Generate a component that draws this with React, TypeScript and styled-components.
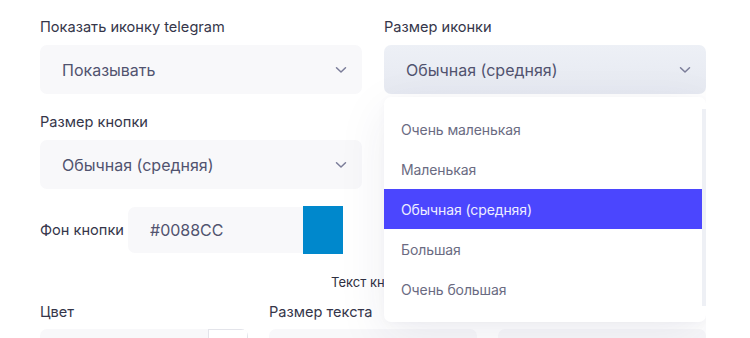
import React from "react";
import styled, { createGlobalStyle } from "styled-components";

const GlobalStyle = createGlobalStyle`
  body {
    margin: 0;
    background: #ffffff;
    font-family: Inter, "Noto Sans", sans-serif;
    overflow: hidden;
  }
`;

const Page = styled.div`
  width: 706px;
  height: 338px;
  padding: 17px 0 0 40px;
  box-sizing: border-box;
  overflow: hidden;
`;

const TopGrid = styled.div`
  display: grid;
  grid-template-columns: 322px 322px;
  column-gap: 22px;
  row-gap: 18px;
`;

const Field = styled.div`
  position: relative;
  display: flex;
  flex-direction: column;
  gap: 8px;
`;

const Label = styled.div`
  font-size: 14.6px;
  font-weight: 400;
  line-height: 20px;
  color: #35364a;
`;

const Select = styled.div<{ $active?: boolean }>`
  height: 49px;
  box-sizing: border-box;
  padding: 0 15px 0 22px;
  border-radius: 7px;
  background: ${(p) =>
    p.$active ? "linear-gradient(180deg, #edf0f6 0%, #e6e9f1 100%)" : "#f8f8fa"};
  display: flex;
  align-items: center;
  justify-content: space-between;
  font-size: 16px;
  color: #51536f;
`;

const Chevron = () => (
  <svg width="12" height="8" viewBox="0 0 12 8" fill="none">
    <path d="M1.5 1.8 6 6 10.5 1.8" stroke="#7b7d99" strokeWidth="1.5" strokeLinecap="round" strokeLinejoin="round" />
  </svg>
);

const Dropdown = styled.div`
  position: absolute;
  top: calc(100% + 3px);
  left: 0;
  width: 322px;
  height: 225px;
  background: #ffffff;
  border-radius: 7px;
  box-shadow: 0 14px 50px rgba(40, 40, 90, 0.08), 0 2px 8px rgba(40, 40, 90, 0.03);
  display: flex;
  z-index: 5;
`;

const Options = styled.div`
  flex: 1;
  padding-top: 12px;
`;

const Option = styled.div<{ $selected?: boolean }>`
  height: 40px;
  padding-left: 17px;
  display: flex;
  align-items: center;
  font-size: 14px;
  letter-spacing: -0.1px;
  color: ${(p) => (p.$selected ? "#eeeeff" : "#6a6b82")};
  background: ${(p) => (p.$selected ? "#4b46fe" : "transparent")};
`;

const ScrollTrack = styled.div`
  width: 4px;
  margin: 12px 0 16px;
  background: #eef0f5;
`;

const ColorRow = styled.div`
  margin-top: 17px;
  display: flex;
  align-items: center;
`;

const InlineLabel = styled(Label)`
  width: 88px;
`;

const ColorInput = styled.div`
  width: 175px;
  height: 46px;
  box-sizing: border-box;
  padding-left: 22px;
  border-radius: 7px 0 0 7px;
  background: #f8f8fa;
  display: flex;
  align-items: center;
  font-size: 16px;
  color: #51536f;
`;

const Swatch = styled.div<{ $color: string; $w: number; $h: number }>`
  width: ${(p) => p.$w}px;
  height: ${(p) => p.$h}px;
  background: ${(p) => p.$color};
  box-sizing: border-box;
  border: ${(p) => (p.$color === "#ffffff" ? "1px solid #e3e4ea" : "none")};
  flex-shrink: 0;
`;

const SectionTitle = styled.div`
  margin-top: 19px;
  text-align: center;
  font-size: 13px;
  line-height: 18px;
  color: #2f3042;
`;

const BottomGrid = styled.div`
  margin-top: 11px;
  display: grid;
  grid-template-columns: 208px 208px 208px;
  column-gap: 21px;
`;

const SmallField = styled.div`
  display: flex;
  flex-direction: column;
  gap: 7px;
`;

const BottomInput = styled.div`
  height: 46px;
  border-radius: 7px;
  background: #f8f8fa;
  display: flex;
  justify-content: flex-end;
  overflow: hidden;
`;

const sizes = ["Очень маленькая", "Маленькая", "Обычная (средняя)", "Большая", "Очень большая"];

export default function App() {
  return (
    <>
      <GlobalStyle />
      <Page>
        <TopGrid>
          <Field>
            <Label>Показать иконку telegram</Label>
            <Select>
              Показывать
              <Chevron />
            </Select>
          </Field>
          <Field>
            <Label>Размер иконки</Label>
            <Select $active>
              Обычная (средняя)
              <Chevron />
            </Select>
            <Dropdown>
              <Options>
                {sizes.map((s) => (
                  <Option key={s} $selected={s === "Обычная (средняя)"}>
                    {s}
                  </Option>
                ))}
              </Options>
              <ScrollTrack />
            </Dropdown>
          </Field>
          <Field>
            <Label>Размер кнопки</Label>
            <Select>
              Обычная (средняя)
              <Chevron />
            </Select>
          </Field>
        </TopGrid>
        <ColorRow>
          <InlineLabel>Фон кнопки</InlineLabel>
          <ColorInput>#0088CC</ColorInput>
          <Swatch $color="#0088cc" $w={40} $h={48} />
        </ColorRow>
        <SectionTitle>Текст кнопки</SectionTitle>
        <BottomGrid>
          <SmallField>
            <Label>Цвет</Label>
            <BottomInput>
              <Swatch $color="#ffffff" $w={40} $h={40} />
            </BottomInput>
          </SmallField>
          <SmallField>
            <Label>Размер текста</Label>
            <BottomInput />
          </SmallField>
          <SmallField>
            <Label>Шрифт</Label>
            <BottomInput />
          </SmallField>
        </BottomGrid>
      </Page>
    </>
  );
}
